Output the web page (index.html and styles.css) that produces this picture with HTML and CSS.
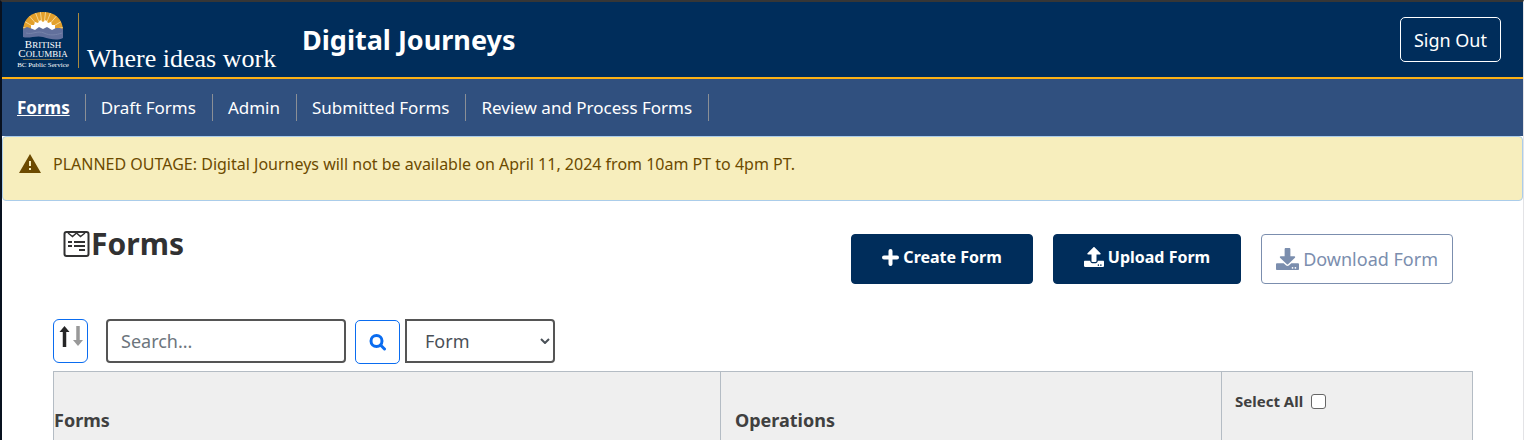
FILE: index.html
```html
<!DOCTYPE html>
<html lang="en">
<head>
<meta charset="utf-8">
<title>Digital Journeys</title>
<link rel="stylesheet" href="styles.css">
</head>
<body>
<div class="app">
  <header class="header">
    <svg class="logo" width="264" height="66" viewBox="0 -3 264 66" role="img" aria-label="British Columbia BC Public Service, Where ideas work">
      <defs>
        <clipPath id="sun"><path d="M6 29V21C6 9 14 2 26 2S46 9 46 21V29Z"/></clipPath>
      </defs>
      <g clip-path="url(#sun)">
        <rect x="6" y="2" width="40" height="24" fill="#e3a02b"/>
        <g stroke="#f6d48c" stroke-width="1">
          <path d="M26 22L4 17M26 22L5 10M26 22L10 3M26 22L17 -1M26 22L23 -1M26 22L29 -1M26 22L35 -1M26 22L42 3M26 22L47 10M26 22L48 17"/>
        </g>
        <path d="M13 22L14 18L14 15L17 15L18 12L21 13L23 10L26 12L29 10L31 13L34 12L35 15L38 15L38 18L39 22Z" fill="#fff"/>
      </g>
      <path d="M6 19L10 17L13 18L18 20L22 17L26 19L30 17L35 20L39 18L43 18L46 19V28C40 31 33 29 26 27C19 25 12 29 6 27Z" fill="#62709c"/>
      <path d="M9 23C16 25 20 20 27 23C33 26 39 25 45 23" fill="none" stroke="#7683aa" stroke-width="1"/>
      <text class="logo-name" x="26" y="38" text-anchor="middle">B<tspan class="logo-small">RITISH</tspan></text>
      <text class="logo-name" x="26" y="47" text-anchor="middle">C<tspan class="logo-small">OLUMBIA</tspan></text>
      <path d="M6 49.500H46" stroke="#7c7350" stroke-width="1"/>
      <text class="logo-service" x="26" y="57" text-anchor="middle">BC Public Service</text>
      <path d="M61.500 3V58" stroke="#a8893e" stroke-width="1"/>
      <text class="logo-tagline" x="70" y="57">Where ideas work</text>
    </svg>
    <h1 class="brand">Digital Journeys</h1>
    <button class="sign-out" type="button">Sign Out</button>
  </header>
  <nav class="nav">
    <a class="nav-link active" href="#forms">Forms</a>
    <a class="nav-link" href="#drafts">Draft Forms</a>
    <a class="nav-link" href="#admin">Admin</a>
    <a class="nav-link" href="#submitted">Submitted Forms</a>
    <a class="nav-link" href="#review">Review and Process Forms</a>
  </nav>
  <div class="alert" role="alert">
    <svg width="22" height="19" viewBox="0 0 22 19" aria-hidden="true"><path fill="#6c4a00" fill-rule="evenodd" d="M11 0L22 19H0ZM10 7V12H12V7ZM10 14V16H12V14Z"/></svg>
    <span>PLANNED OUTAGE: Digital Journeys will not be available on April 11, 2024 from 10am PT to 4pm PT.</span>
  </div>
  <main class="main">
    <div class="title-row">
      <h2 class="title">
        <svg width="28" height="28" viewBox="0 0 28 28" fill="none" stroke="#313132" aria-hidden="true">
          <rect x="1.500" y="2" width="24" height="24" rx="2" stroke-width="2"/>
          <path d="M5 3L9.500 6.500L13.500 3L17.500 6.500L22 3" stroke-width="1.500"/>
          <path d="M5 12H9M11 12H22M5 16H9M11 16H22M16 20H22" stroke-width="2"/>
        </svg>
        <span>Forms</span>
      </h2>
      <div class="actions">
        <button class="btn btn-create" type="button">
          <svg width="17" height="17" viewBox="0 0 17 17" aria-hidden="true"><path d="M8.500 2V15M2 8.500H15" stroke="currentColor" stroke-width="4" stroke-linecap="round"/></svg>
          Create Form
        </button>
        <button class="btn btn-upload" type="button">
          <svg width="20" height="20" viewBox="0 0 512 512" fill="currentColor" aria-hidden="true"><path d="M296 384h-80c-13.300 0-24-10.700-24-24V192h-87.700c-17.800 0-26.700-21.500-14.100-34.100L242.300 5.700c7.500-7.500 19.800-7.500 27.300 0l152.200 152.200c12.600 12.600 3.700 34.100-14.100 34.100H320v168c0 13.300-10.700 24-24 24zm216-8v112c0 13.300-10.700 24-24 24H24c-13.300 0-24-10.700-24-24V376c0-13.300 10.700-24 24-24h136v8c0 30.900 25.100 56 56 56h80c30.900 0 56-25.100 56-56v-8h136c13.300 0 24 10.700 24 24zm-124 88c0-11-9-20-20-20s-20 9-20 20 9 20 20 20 20-9 20-20zm64 0c0-11-9-20-20-20s-20 9-20 20 9 20 20 20 20-9 20-20z"/></svg>
          Upload Form
        </button>
        <button class="btn btn-download" type="button" disabled>
          <svg width="23" height="22" viewBox="0 0 512 512" preserveAspectRatio="none" fill="currentColor" aria-hidden="true"><path d="M216 0h80c13.300 0 24 10.700 24 24v168h87.700c17.800 0 26.700 21.500 14.100 34.100L269.700 378.300c-7.500 7.500-19.800 7.500-27.300 0L90.100 226.100c-12.600-12.600-3.700-34.100 14.100-34.100H192V24c0-13.300 10.700-24 24-24zm296 376v112c0 13.300-10.700 24-24 24H24c-13.300 0-24-10.700-24-24V376c0-13.300 10.700-24 24-24h146.700l49 49c20.100 20.100 52.500 20.100 72.600 0l49-49H488c13.300 0 24 10.700 24 24zm-124 88c0-11-9-20-20-20s-20 9-20 20 9 20 20 20 20-9 20-20zm64 0c0-11-9-20-20-20s-20 9-20 20 9 20 20 20 20-9 20-20z"/></svg>
          Download Form
        </button>
      </div>
    </div>
    <div class="filters">
      <button class="icon-btn sort" type="button" aria-label="Sort">
        <svg width="24" height="24" viewBox="0 0 24 24" fill="none" stroke-width="3.500" aria-hidden="true">
          <path d="M5.500 22V5" stroke="#252526"/><path d="M0.500 7L5.500 1L10.500 7Z" fill="#252526"/>
          <path d="M19 1V17" stroke="#999"/><path d="M14 15L19 21L24 15Z" fill="#999"/>
        </svg>
      </button>
      <input class="search" type="text" placeholder="Search..." aria-label="Search">
      <button class="icon-btn go" type="button" aria-label="Run search">
        <svg width="18" height="18" viewBox="0 0 18 18" fill="none" stroke="#0a6cf0" aria-hidden="true"><circle cx="7.500" cy="8" r="5.500" stroke-width="3"/><path d="M11.500 12L15.500 16" stroke-width="3" stroke-linecap="round"/></svg>
      </button>
      <span class="select-box">
        <select class="kind" aria-label="Type"><option>Form</option><option>Bundle</option></select>
        <svg class="chevron" width="10" height="6" viewBox="0 0 10 6" fill="none" stroke="#495057" stroke-width="2" aria-hidden="true"><path d="M1 1L5 5L9 1"/></svg>
      </span>
    </div>
    <table class="table">
      <thead>
        <tr>
          <th class="col-forms" scope="col">Forms</th>
          <th class="col-ops" scope="col">Operations</th>
          <th class="col-select" scope="col"><label class="select-all">Select All <input type="checkbox"></label></th>
        </tr>
      </thead>
    </table>
  </main>
</div>
</body>
</html>
```

FILE: styles.css
```css
* { box-sizing: border-box; }
body {
  margin: 0;
  font-family: "Noto Sans", sans-serif;
  font-size: 18px;
  color: #313132;
  background: #fff;
}
button, input, select { font: inherit; margin: 0; }
svg { flex: none; }
.app {
  height: 100vh;
  overflow: hidden;
  border-top: 2px solid #363636;
  border-left: 2px solid #08111f;
  border-right: 1px solid #e3e3e6;
}
.header {
  display: flex;
  align-items: center;
  height: 77px;
  padding: 0 22px 0 15px;
  background: #002d5b;
  border-bottom: 2px solid #fcb116;
  color: #fff;
}
.logo { font-family: "Liberation Serif", serif; fill: #fff; }
.logo-name { font-size: 11px; }
.logo-small { font-size: 9px; }
.logo-service { font-size: 7px; }
.logo-tagline { font-size: 26px; }
.brand { margin: 0 auto 0 21px; font-size: 27px; line-height: 36px; font-weight: 700; }
.sign-out {
  height: 45px;
  padding: 0 13px;
  border: 1px solid #fff;
  border-radius: 5px;
  background: transparent;
  color: #fff;
}
.nav {
  display: flex;
  align-items: center;
  height: 57px;
  background: #30507f;
}
.nav-link {
  padding: 0 15px;
  border-right: 1px solid #8a8f96;
  color: #fff;
  font-size: 17px;
  line-height: 27px;
  text-decoration: none;
}
.nav-link + .nav-link { padding-right: 16px; }
.nav-link.active { font-weight: 700; text-decoration: underline; }
.alert {
  display: flex;
  align-items: flex-start;
  gap: 12px;
  height: 65px;
  padding: 17px 16px;
  border: 1px solid #abcdea;
  border-radius: 4px;
  background: #f7eebd;
  color: #6c4a00;
  font-size: 16px;
  line-height: 20px;
}
.main { padding: 0 50px 0 51px; }
.title-row {
  display: flex;
  justify-content: space-between;
  align-items: flex-start;
  padding: 22px 20px 35px 10px;
}
.title {
  display: flex;
  align-items: center;
  margin: 0;
  font-size: 30px;
  line-height: 42px;
  font-weight: 700;
}
.actions { display: flex; gap: 20px; padding-top: 11px; }
.btn {
  display: flex;
  align-items: center;
  justify-content: center;
  gap: 4px;
  height: 50px;
  padding: 0 30px 4px;
  border: 1px solid #002d5b;
  border-radius: 4px;
  background: #002d5b;
  color: #fff;
  font-size: 16px;
  font-weight: 700;
  white-space: nowrap;
}
.btn-download {
  padding: 0 14px;
  border-color: #7b8eae;
  background: #fff;
  color: #7b8eae;
  font-size: 18px;
  font-weight: 400;
}
.filters { display: flex; align-items: flex-start; padding-bottom: 7px; }
.icon-btn {
  display: flex;
  justify-content: center;
  height: 44px;
  padding: 0;
  border: 1px solid #0a6cf0;
  border-radius: 6px;
  background: #fff;
}
.sort { width: 35px; padding-top: 5px; margin-right: 18px; }
.go { width: 45px; align-items: center; margin: 1px 5px 0 9px; border-radius: 5px; }
.search {
  width: 240px;
  height: 44px;
  padding: 0 13px;
  border: 2px solid #555;
  border-radius: 4px;
  background: #fff;
}
.search::placeholder { color: #6c757d; opacity: 1; }
.select-box { position: relative; }
.kind {
  display: block;
  width: 150px;
  height: 44px;
  padding: 0 18px;
  appearance: none;
  border: 2px solid #555;
  border-radius: 0 4px 4px 0;
  background: #fff;
  color: #495057;
}
.chevron { position: absolute; right: 5px; top: 19px; pointer-events: none; }
.table {
  width: 100%;
  table-layout: fixed;
  border-collapse: collapse;
  background: #efefef;
}
.table th {
  height: 96px;
  padding: 0;
  border: 1px solid #b4bcc4;
  color: #404040;
  text-align: left;
  vertical-align: middle;
}
.table .col-forms { width: 47%; }
.table .col-ops { padding-left: 14px; }
.table .col-select { width: 251px; padding: 18px 13px; vertical-align: top; }
.select-all {
  display: flex;
  align-items: center;
  gap: 8px;
  font-size: 15px;
  line-height: 22px;
}
.select-all input {
  appearance: none;
  width: 15px;
  height: 15px;
  border: 1px solid #666;
  border-radius: 3px;
  background: #fff;
}
```
